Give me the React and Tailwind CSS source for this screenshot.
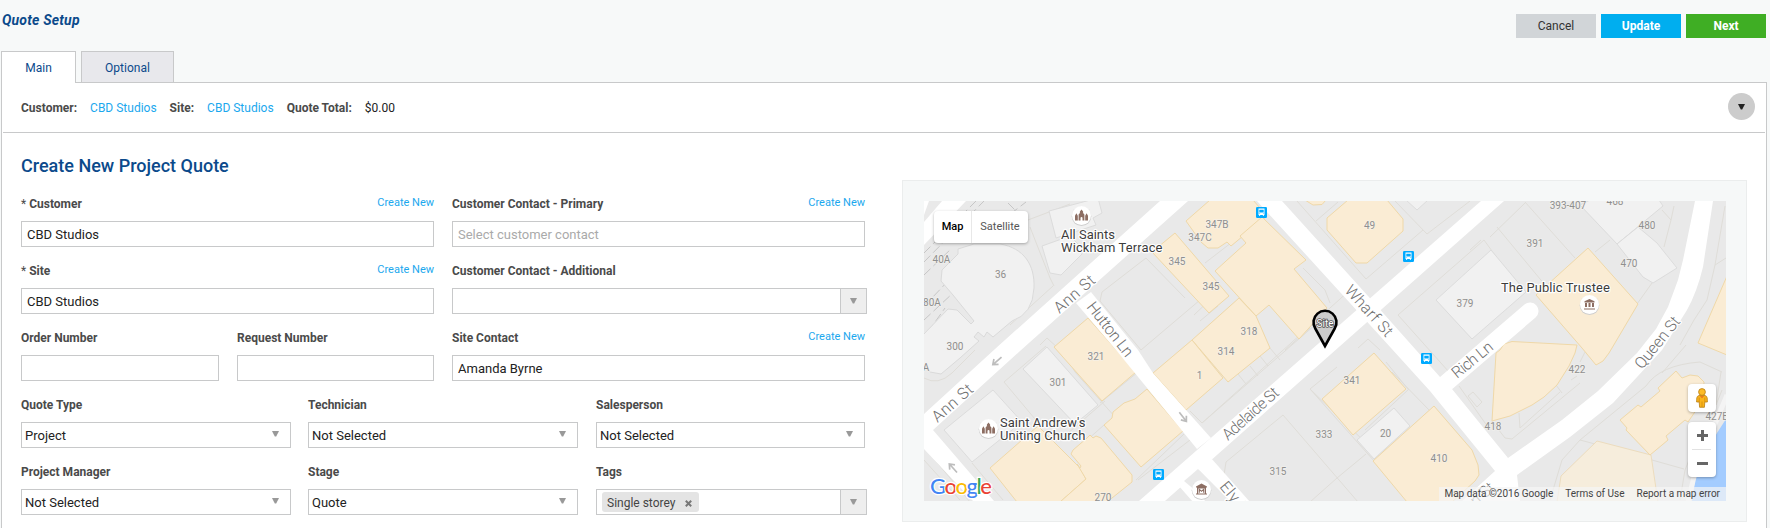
import React from "react";

const Caret = ({ className = "" }) => (
  <svg width="7" height="6" viewBox="0 0 7 6" className={"shrink-0 " + className}>
    <path d="M0 0h7L4.2 5.4h-1.4z" fill="currentColor" />
  </svg>
);

function Field({ label, required, create, className, children }) {
  return (
    <div className={"h-[67px] shrink-0 " + className}>
      <div className="flex h-[28px] justify-between">
        <label className="pt-[3px] text-xs leading-4 font-bold text-[#4a4a4a]">
          {required && <span className="font-normal">* </span>}
          {label}
        </label>
        {create && (
          <a className="pt-[2px] text-[11px] leading-4 text-[#1ba8ee]">Create New</a>
        )}
      </div>
      {children}
    </div>
  );
}

const Input = ({ value = "", muted }) => (
  <div
    className={
      "flex h-[26px] items-center border border-[#c8c9ca] bg-white pl-[5px] pt-px text-[13px] " +
      (muted ? "text-[#aaaaaa]" : "text-[#222222]")
    }
  >
    {value}
  </div>
);

const Select = ({ value }) => (
  <div className="flex h-[26px] items-center justify-between border border-[#c8c9ca] bg-white pl-[3px] pr-[11px] text-[13px] text-[#222222]">
    <span className="pt-px">{value}</span>
    <Caret className="-mt-[3px] text-[#999999]" />
  </div>
);

const Combo = ({ children }) => (
  <div className="flex h-[26px] border border-[#c8c9ca] bg-white">
    <div className="flex flex-1 items-center pl-[5px]">{children}</div>
    <div className="flex w-[26px] items-center justify-center border-l border-[#c8c9ca] bg-[#eeeeee]">
      <Caret className="text-[#999999]" />
    </div>
  </div>
);

const cream = [
  "1210,200 1253,200 1267,216 1231,246 1227,242 1218,248 1208,248 1201,242 1186,221",
  "1262,217 1306,260 1294,269 1327,308 1299,339 1269,305 1256,316 1215,271 1246,243 1240,236",
  "1175,233 1229,296 1209,313 1152,252",
  "1239,298 1256,316 1270,348 1228,382 1192,340",
  "1192,340 1223,378 1186,410 1153,373",
  "1088,318 1136,372 1102,401 1054,347",
  "1147,389 1183,431 1141,467 1104,425 1112,418 1113,412 1124,403 1135,399",
  "1038,426 1080,468 1086,479 1060,502 1017,502 990,468",
  "1087,438 1090,435 1093,438 1096,436 1101,438 1132,475 1132,482 1107,502 1060,502 1086,479 1077,464 1080,468 1081,466 1071,454 1073,450",
  "1348,200 1387,200 1403,219 1403,231 1367,263 1356,263 1327,230 1327,218",
  "1305,200 1313,205 1322,204.5 1326,200",
  "1588,248 1638,304 1612,348 1609,353 1603,361 1596,365 1582,348 1536,295",
  "1374,353 1406,389 1353,435 1322,399",
  "1434,406 1472,450 1478,465 1479,475 1475,481 1452,502 1407,502 1373,461",
  "1727,276 1698,343 1727,355",
  "1500,350 1504,344 1512,341.5 1577,345 1575,353 1569,366 1557,385 1544,397 1532,405 1510,416 1492,421 1496,353",
  "1676,371 1682,378 1690,375 1698,376 1704,382 1703,400 1688,422 1685,420 1666,436 1668,440 1650,455 1626,430 1627,428 1620,420 1638,405 1641,407 1660,391 1658,388",
];

const grey = [
  "1023,369 1047,347 1098,405 1075,424",
  "993,390 1022,422 972,462 944,430",
  "1049,211 1098,198 1102,213 1093,218 1096,225 1056,238",
  "1042,246 1070,236 1082,248 1082,254 1061,275 1050,273",
  "1436,300 1491,250 1526,292 1472,339",
  "1406,200 1417,210 1428,200",
  "1580,205 1590,200 1659,200 1663,206 1617,244",
  "1617,244 1638,227 1657,243 1677,268 1653,283 1643,277",
  "1394,408 1410,426 1374,459 1357,440",
];

const parcels =
  "M1028 220L1070 204M1030 227L1050 278 1054 286M934 420L1050 316M1053 286L1010 325M1146 258L1185 298M1146 258L1102 292 1100 301 1141 350M1141 350L1200 300" +
  "M1205 263L1240 236M1194 315L1215 295M1200 321L1218 306M1208 327L1228 310M1303 268L1325 290 1330 303M1285 350L1310 328M1297 201L1366 279 1423 230M1316 221L1338 202M1395 201L1427 234 1470 201" +
  "M1398 315L1484 240 1500 262M1398 315L1449 372M1358 348L1368 339 1380 350M1497 227L1545 285M1481 240L1470 250M1525 202L1575 258M1490 237L1525 203M1595 252L1610 240M1662 210L1671 220 1674 206M1671 220L1664 247M1652 283L1637 304" +
  "M1725 206L1715 265 1707 300 1694 320 1680 345M1715 265L1726 258M1190 411L1202 423 1350 290M1202 423L1315 325M1310 389L1425 500M1310 389L1337 367M1283 415L1358 502M1337 478L1310 502M1337 478L1366 454M1283 415L1226 462 1224 475M1310 389L1375 462" +
  "M1392 372L1430 411M1409 389L1365 430M1386 362L1408 389M1238 374L1246 384M1250 366L1258 376M1260 356L1268 366M1270 348L1280 360M1459 386L1490 430M1468 396L1473 392 1482 402 1477 407zM1492 421L1505 438 1512 439 1580 383M1519 413L1520 428 1560 392M1556 385L1562 393M1571 380L1577 376M1585 352L1580 362" +
  "M1646 386Q1660 365 1700 362L1722 372M1580 440L1646 386M1550 500L1562 460 1580 440 1595 444M1652 460L1684 469M1680 500L1685 470 1697 440M1662 373L1686 345M1721 372L1716 405 1722 390" +
  "M1004 382L1040 425M1004 382L1046 346M972 463L1003 500M973 460L1010 428M1060 440L1105 401M1078 448L1104 425M1100 403L1138 372M1136 480L1184 434M1138 370L1155 392 1195 440M924 378Q938 386 952 373L975 350M924 460L960 500M935 460L970 502M990 360L1010 340M1062 348L1075 372 1140 445M1040 345L1047 338 1060 350M1138 480L1190 440";

const rail = "M924 253L976 201M924 262L984 201M924 275L952 248M924 305L930 300 950 279M924 320L953 293M1000 222L1026 202M1008 203L1018 213M928 332L945 308";

const numbers = [
  ["36", 1000.5, 278], ["40A", 941.5, 263], ["80A", 932, 306], ["300", 955, 350],
  ["347B", 1217, 228], ["347C", 1200, 241], ["345", 1177, 265], ["345", 1211, 290],
  ["318", 1249, 335], ["314", 1226, 355], ["1", 1199.5, 379], ["321", 1096, 360],
  ["301", 1058, 386], ["49", 1369.5, 229], ["391", 1535, 247], ["393-407", 1568, 209],
  ["468", 1615, 205], ["480", 1647, 229], ["470", 1629, 267], ["379", 1465, 307],
  ["341", 1352, 384], ["333", 1324, 438], ["315", 1278, 475], ["20", 1385.5, 437],
  ["410", 1439, 462], ["422", 1577, 373], ["418", 1493, 430], ["427B", 1717, 420],
  ["270", 1103, 501], ["304A", 917.5, 371],
];

const streets = [
  ["Ann St", 1059.5, 314, -41, 49], ["Ann St", 937.500, 423, -41, 49],
  ["Hutton Ln", 1086, 307, 52, 65], ["Wharf St", 1344, 291, 48, 63],
  ["Adelaide St", 1228, 441, -42, 70], ["Rich Ln", 1457, 379, -39, 48],
  ["Queen St", 1642, 370, -51, 62], ["Ely Ln", 1219, 487, 50, 44],
  ["Queen St", 1449, 530, -41, 62],
];

const Bus = ({ x, y }) => (
  <g transform={`translate(${x} ${y})`}>
    <rect width="11" height="11" rx="1.2" fill="#00aaff" />
    <path fill="#fff" fillRule="evenodd" d="M2.5 1.5h6v6.4h-.7v1.2H6.9V7.9H4.1v1.2H3.2V7.9h-.7zM3.3 2.8v2.8h4.4V2.8zM3.2 6.4v.7h.9v-.7zm3.7 0v.7h.9v-.7z" />
  </g>
);

const Poi = ({ x, y, children }) => (
  <g transform={`translate(${x} ${y})`}>
    <circle cy="0.7" r="9.8" fill="#cfcfcf" />
    <circle r="9.5" fill="#fff" />
    <g fill="#8d6e63">{children}</g>
  </g>
);

const church = <path d="M-6.5 5V.2l1.4-2.4L-3.700.2V5zM-2.900 5V-1L-1.600-2.600V-4L0-6 1.600-4V-2.600L2.900-1V5H1V2.500a1 1 0 0 0-2 0V5zM3.700 5V.2l1.4-2.400L6.500.2V5z" />;

const Arrow = ({ x, y, r }) => (
  <path transform={`translate(${x} ${y}) rotate(${r})`} d="M-6 0H5M1-3.500L5.500 0 1 3.500" fill="none" stroke="#bdbdbd" strokeWidth="1.7" />
);

function CityMap() {
  return (
    <svg width="802" height="300" viewBox="924 201 802 300" className="block" fontFamily="Roboto, sans-serif">
      <rect x="924" y="201" width="802" height="300" fill="#e9e9e9" />
      <path d={parcels} fill="none" stroke="#dfddd8" />
      <path d={rail} fill="none" stroke="#c6c6c6" strokeDasharray="9 4" />
      <path fill="#f1f1f1" stroke="#dadada" d="M942 270L958 254 958 249 974 244H1000C1024 248 1035 265 1034 288Q1033 314 1012 321L993 337 987 332 984 337 978 332 974 337 979 341 960 358 941 374 930 372 923 365V335L948 309 957 310 971 324 974 321 953 295 941 281z" />
      <g fill="#f1f1f1" stroke="#dcdcdc">{grey.map((p) => <polygon key={p} points={p} />)}</g>
      <path fill="#a3ccff" d="M1726 419L1717 433 1703 457 1695 481 1692 501H1726z" />
      <path d="M1727 395L1710 436 1698 460 1688 502" fill="none" stroke="#f4f4f4" strokeWidth="5" />
      <polygon points="1597,441 1651,455 1658,502 1557,502 1561,476" fill="#f6eddc" stroke="#ecdcbe" />
      <g fill="#faecd4" stroke="#efd8a8">{cream.map((p) => <polygon key={p} points={p} />)}</g>
      <g fill="#fff">
        <path d="M942 201H966L924 245V222zM924 201H929L924 215z" />
        <path d="M1160 201H1188L1020 351 933 430 994 501H973L924 449V414L995 349z" />
        <path d="M1076 303L1091 292 1138 350 1153 373 1211 438 1197 449 1116 350z" />
        <path d="M1139 501L1481 201H1504L1165 501z" />
        <path d="M1257 201H1282L1368 296 1416 350 1440 377 1452 389 1508 458 1562 420 1598 391 1637 353 1656 329 1668 307 1678 280 1683 260 1695 201H1713L1703 267Q1697 292 1687 310L1662 350 1613 403 1570 437 1517 475 1520 501H1462L1495 471 1430 391 1391 348z" />
        <path d="M1190 462L1211 458 1250 502H1230L1198 469zM1178 485L1187 480 1206 502H1193z" />
      </g>
      <path d="M1445 384L1530 311" stroke="#fff" strokeWidth="17" strokeLinecap="round" />
      <path d="M1190 476L1198 469 1230 501H1208L1184 481z" fill="#e9e9e9" />

      <g fontSize="10" textAnchor="middle" fill="#8f8f8f" stroke="#f4f2ee" strokeOpacity="0.7" strokeWidth="1.5" paintOrder="stroke">
        {numbers.map(([t, x, y]) => <text key={t + x} x={x} y={y}>{t}</text>)}
      </g>
      <g fontSize="16" fontWeight="300" fill="#707070" stroke="#fff" strokeWidth="2.500" paintOrder="stroke" strokeLinejoin="round">
        {streets.map(([t, x, y, r, w]) => (
          <text key={t + x} transform={`translate(${x} ${y}) rotate(${r})`} textLength={w}>{t}</text>
        ))}
      </g>
      <Arrow x={997} y={361} r={139} />
      <Arrow x={953} y={468} r={-132} />
      <Arrow x={1183} y={417} r={52} />

      <Bus x={1256} y={207} />
      <Bus x={1403} y={251} />
      <Bus x={1421} y={353} />
      <Bus x={1153} y={469} />

      <Poi x={1081.500} y={215.500}>{church}</Poi>
      <Poi x={988.500} y={428.500}>{church}</Poi>
      <Poi x={1589.500} y={304.500}>
        <path d="M0-5.500L5-3.200V-2H-5V-3.200zM-4.500-1.500h2v4h-2zM-1 -1.500h2v4h-2zM2.500-1.500h2v4h-2zM-5.500 4h11v1h-11z" />
      </Poi>
      <Poi x={1201.500} y={489.500}>
        <path fillRule="evenodd" d="M0-6L5.500-3V-2H-5.500V-3zM-4.500-2h9v6h1v1h-11v-1h1zM-3.300-1v5h6.600v-5z" />
        <path d="M-2.200 3.300V-.3L0 1.800 2.200-.3V3.300" fill="none" stroke="#8d6e63" strokeWidth="1.100" />
      </Poi>
      <g fontSize="13" fill="#3c3c3c" stroke="#fff" strokeOpacity="0.9" strokeWidth="2.500" paintOrder="stroke" strokeLinejoin="round">
        <text x="1061" y="239" textLength="54">All Saints</text>
        <text x="1061" y="252" textLength="101.500">Wickham Terrace</text>
        <text x="1000" y="427" textLength="85.500">Saint Andrew's</text>
        <text x="1000" y="440" textLength="85.500">Uniting Church</text>
        <text x="1501" y="292" textLength="109">The Public Trustee</text>
      </g>

      <path d="M1325 346L1315.300 328.500A11.500 11.500 0 1 1 1334.700 328.500z" fill="#cccccc" stroke="#000" strokeWidth="2.600" />
      <text x="1325" y="327" textAnchor="middle" fontSize="10" fill="#fff" stroke="#555" strokeWidth="1.500" paintOrder="stroke">Site</text>

      <text x="930" y="494" fontSize="22" fontWeight="500" textLength="62" stroke="#fff" strokeWidth="2.500" paintOrder="stroke" fontFamily="Lato, sans-serif">
        <tspan fill="#4285f4">G</tspan><tspan fill="#ea4335">o</tspan><tspan fill="#fbbc05">o</tspan><tspan fill="#4285f4">g</tspan><tspan fill="#34a853">l</tspan><tspan fill="#ea4335">e</tspan>
      </text>
    </svg>
  );
}

const Pegman = () => (
  <svg width="12" height="20" viewBox="0 0 12 20">
    <path d="M3 7.500Q1 8 .8 10L.6 14H3.200L3.600 19.300H8.400L8.800 14H11.400L11.200 10Q11 8 9 7.500z" fill="#fbb41a" stroke="#b87d13" strokeWidth=".8" />
    <circle cx="6" cy="4" r="3.400" fill="#fdbb26" stroke="#b87d13" strokeWidth=".8" />
    <path d="M3.500 7.400Q6 9 8.500 7.400L6 10.200z" fill="#e8711c" />
    <path d="M6 13.500V19M3.200 9.500V14M8.800 9.500V14" stroke="#c98612" strokeWidth=".7" />
  </svg>
);

function MapPanel() {
  return (
    <div className="h-[342px] w-[845px] shrink-0 border border-[#ebeded] bg-[#f6f8f8] px-[21px] pt-[20px]">
      <div className="relative h-[300px] w-[802px] overflow-hidden">
        <CityMap />
        <div className="absolute top-[10px] left-[10px] flex h-8 items-center rounded-sm bg-white text-[11px] shadow-[0_1px_3px_rgba(0,0,0,0.3)]">
          <div className="flex h-full w-[38px] items-center justify-center border-r border-[#e8e8e8] font-medium text-black">Map</div>
          <div className="flex h-full w-[56px] items-center justify-center text-[#565656]">Satellite</div>
        </div>
        <div className="absolute top-[183px] left-[764px] flex size-7 items-center justify-center rounded-sm bg-white shadow-[0_1px_3px_rgba(0,0,0,0.3)]">
          <Pegman />
        </div>
        <div className="absolute top-[221px] left-[764px] flex h-[55px] w-7 flex-col items-center rounded-sm bg-white shadow-[0_1px_3px_rgba(0,0,0,0.3)]">
          <svg width="28" height="55" viewBox="0 0 28 55">
            <path d="M9 13.500H20M14.500 8V19M9 41.500H20" stroke="#666" strokeWidth="3" />
            <path d="M4 27.500H23" stroke="#e2e2e2" />
          </svg>
        </div>
        <div className="absolute right-0 bottom-0 flex h-[14px] items-center gap-3 bg-[#f5f5f5]/70 pr-[6px] pl-[5px] text-[10px] leading-none whitespace-nowrap text-[#444444]">
          <span>Map data ©2016 Google</span>
          <span>Terms of Use</span>
          <span>Report a map error</span>
        </div>
      </div>
    </div>
  );
}

export default function App() {
  return (
    <div className="flex h-[528px] w-[1770px] flex-col overflow-hidden bg-[#f7f9f9] font-['Roboto',sans-serif] text-[#222222]">
      <header className="flex h-[51px] shrink-0 justify-between pr-1 pl-[2px]">
        <h1 className="pt-[11px] text-sm leading-[18px] font-bold tracking-[0.2px] text-[#0b4a8b] italic">Quote Setup</h1>
        <div className="flex gap-[5px] pt-[14px] text-xs">
          <button className="h-6 w-20 bg-[#d1d5d8] text-[#333333]">Cancel</button>
          <button className="h-6 w-20 bg-[#00aeef] font-bold text-white">Update</button>
          <button className="h-6 w-20 bg-[#3fae24] font-bold text-white">Next</button>
        </div>
      </header>
      <nav className="z-10 flex h-8 shrink-0 gap-[5px] pl-px text-xs text-[#0b4a8b]">
        <div className="flex w-[75px] items-center justify-center border border-b-0 border-[#c8c9ca] bg-white">Main</div>
        <div className="flex w-[93px] items-center justify-center border border-[#c8c9ca] bg-[#e8e8ec] pt-px">Optional</div>
      </nav>
      <main className="-mt-px mr-[3px] ml-px h-[460px] shrink-0 border border-[#c8c9ca] bg-white">
        <div className="mx-px flex h-[50px] items-center justify-between border-b border-[#c8c9ca] pr-[10px] pl-[18px] text-xs">
          <div className="flex items-center pt-px">
            <b className="mr-[13px] text-[#4a4a4a]">Customer:</b>
            <span className="mr-[13px] text-[#1ba8ee]">CBD Studios</span>
            <b className="mr-[13px] text-[#4a4a4a]">Site:</b>
            <span className="mr-[13px] text-[#1ba8ee]">CBD Studios</span>
            <b className="mr-[13px] text-[#4a4a4a]">Quote Total:</b>
            <span>$0.00</span>
          </div>
          <div className="-mt-[2px] flex size-[27px] items-center justify-center rounded-full bg-[#cccccc]">
            <Caret className="text-[#222222]" />
          </div>
        </div>
        <div className="flex">
          <section className="w-[881px] pt-[19px] pl-[19px]">
            <h2 className="mb-[14px] h-[27px] text-lg leading-[27px] font-medium text-[#0b4a8b]">Create New Project Quote</h2>
            <div className="flex gap-[18px]">
              <Field className="w-[413px]" label="Customer" required create><Input value="CBD Studios" /></Field>
              <Field className="w-[413px]" label="Customer Contact - Primary" create><Input muted value="Select customer contact" /></Field>
            </div>
            <div className="flex gap-[18px]">
              <Field className="w-[413px]" label="Site" required create><Input value="CBD Studios" /></Field>
              <Field className="w-[415px]" label="Customer Contact - Additional"><Combo /></Field>
            </div>
            <div className="flex gap-[18px]">
              <Field className="w-[198px]" label="Order Number"><Input /></Field>
              <Field className="w-[197px]" label="Request Number"><Input /></Field>
              <Field className="w-[413px]" label="Site Contact" create><Input value="Amanda Byrne" /></Field>
            </div>
            <div className="flex">
              <Field className="mr-[17px] w-[270px]" label="Quote Type"><Select value="Project" /></Field>
              <Field className="mr-[18px] w-[270px]" label="Technician"><Select value="Not Selected" /></Field>
              <Field className="w-[269px]" label="Salesperson"><Select value="Not Selected" /></Field>
            </div>
            <div className="flex">
              <Field className="mr-[17px] w-[270px]" label="Project Manager"><Select value="Not Selected" /></Field>
              <Field className="mr-[18px] w-[270px]" label="Stage"><Select value="Quote" /></Field>
              <Field className="w-[271px]" label="Tags">
                <Combo>
                  <span className="flex h-5 w-[97px] items-center justify-between rounded-[3px] bg-[#e4e4e4] pt-[2px] pr-[7px] pl-[5px] text-xs text-[#444444]">
                    Single storey
                    <svg width="7" height="7" viewBox="0 0 7 7"><path d="M.8.8L6.200 6.200M6.200.8L.8 6.200" stroke="#777" strokeWidth="2" /></svg>
                  </span>
                </Combo>
              </Field>
            </div>
          </section>
          <aside className="pt-[47px] pl-[19px]"><MapPanel /></aside>
        </div>
      </main>
    </div>
  );
}
